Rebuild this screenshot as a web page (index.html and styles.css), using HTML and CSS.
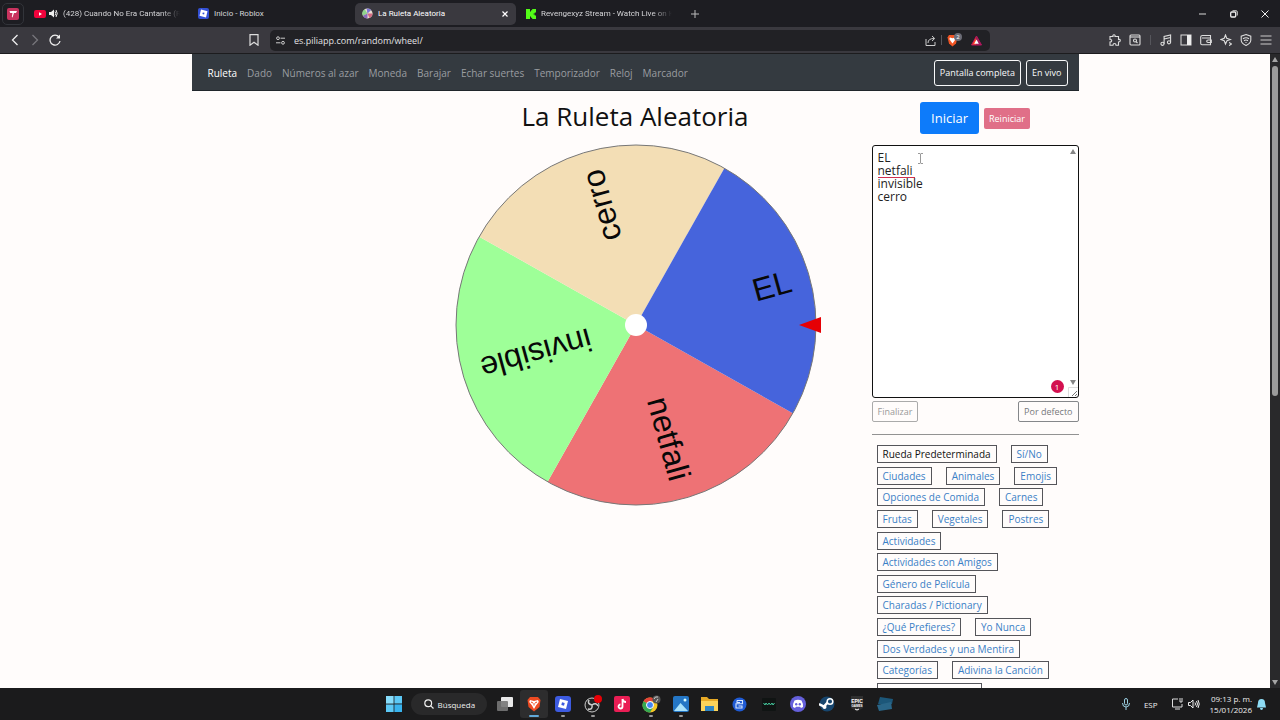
FILE: index.html
```html
<!DOCTYPE html>
<html lang="es">
<head>
<meta charset="utf-8">
<title>La Ruleta Aleatoria</title>
<link rel="stylesheet" href="styles.css">
</head>
<body>
<div class="tabstrip">
  <button class="pinned" aria-label="Pestaña fijada"><svg width="12" height="12" viewBox="0 0 12 12"><rect width="12" height="12" rx="2" fill="#c9335f"/><path d="M2.500 3h7.500L9 5H7L5.500 9.500 4.800 9l.7-4H3.200z" fill="#fff"/></svg></button>
  <button class="tab">
    <svg width="12" height="8" viewBox="0 0 12 8"><rect width="12" height="8" rx="2" fill="#f0033c"/><path d="M5 2.200v3.600L8 4z" fill="#fff"/></svg>
    <svg width="9" height="9" viewBox="0 0 9 9"><path d="M0 3v3h2l3 2.500v-8L2 3z" fill="#eee"/><path d="M6 2.500q1.500 2 0 4M7 1q2.500 3.500 0 7" fill="none" stroke="#eee"/></svg>
    <span class="tab-title fade">(428) Cuando No Era Cantante (R</span>
  </button>
  <button class="tab">
    <svg width="11" height="11" viewBox="0 0 11 11"><rect width="11" height="11" rx="2" fill="#3350d4"/><path d="M3 1.500l6.500 1.700L8 9.500 1.500 7.800z" fill="#fff"/><path d="M4.800 4.400l1.700.4-.4 1.700-1.700-.4z" fill="#3350d4"/></svg>
    <span class="tab-title">Inicio - Roblox</span>
  </button>
  <button class="tab active">
    <svg width="11" height="11" viewBox="-6 -6 12 12"><circle r="5.500" fill="#eadfd2"/><path d="M0 0L-5 2.500A5.500 5.500 0 0 1-3 -4.600z" fill="#8fd58e"/><path d="M0 0L-1-5.400A5.500 5.500 0 0 1 4-3.800z" fill="#7c74d4"/><path d="M0 0L5.500 0A5.500 5.500 0 0 1 2 5z" fill="#d36a82"/><path d="M0 0L0 5.500A5.500 5.500 0 0 1-5 2.500z" fill="#8a69bb"/></svg>
    <span class="tab-title">La Ruleta Aleatoria</span>
    <svg width="6" height="6" viewBox="0 0 6 6"><path d="M.5.500l5 5m0-5l-5 5" stroke="#fff" stroke-width="1.200"/></svg>
  </button>
  <button class="tab">
    <svg width="10" height="10" viewBox="0 0 10 10"><path d="M0 0h4v2.500h1V1.200h1.200V0H10v3.500H8.800v1H7.600v1h1.200v1H10V10H6.200V8.800H5V7.500H4V10H0z" fill="#53fc18"/></svg>
    <span class="tab-title fade">Revengexyz Stream - Watch Live on K</span>
  </button>
  <button class="plus" aria-label="Nueva pestaña"><svg width="8" height="8" viewBox="0 0 8 8"><path d="M4 0v8M0 4h8" stroke="#bbb"/></svg></button>
  <div class="window-controls">
    <button aria-label="Minimizar"><svg width="8" height="8" viewBox="0 0 8 8"><path d="M0 4h7" stroke="#bbb" stroke-width="1.200"/></svg></button>
    <button aria-label="Restaurar"><svg width="8" height="8" viewBox="0 0 8 8"><rect x=".7" y="2" width="5" height="5" rx="1" fill="none" stroke="#eee" stroke-width="1.300"/><path d="M2.500.700h3.500q1.300 0 1.300 1.300v3.500" fill="none" stroke="#ccc"/></svg></button>
    <button aria-label="Cerrar"><svg width="8" height="8" viewBox="0 0 8 8"><path d="M.5.500l7 7m0-7l-7 7" stroke="#eee"/></svg></button>
  </div>
</div>
<div class="toolbar">
  <div class="toolbar-left">
    <button aria-label="Atrás"><svg width="12" height="12" viewBox="0 0 12 12"><path d="M8.500 1L3.500 6l5 5" fill="none" stroke="#eee" stroke-width="1.300"/></svg></button>
    <button aria-label="Adelante"><svg width="12" height="12" viewBox="0 0 12 12"><path d="M3.500 1l5 5-5 5" fill="none" stroke="#77767c" stroke-width="1.300"/></svg></button>
    <button aria-label="Recargar"><svg width="12" height="12" viewBox="0 0 12 12"><path d="M10 3A5 5 0 1 0 11 7" fill="none" stroke="#eee" stroke-width="1.300"/><path d="M11 .5V4.500H7z" fill="#eee"/></svg></button>
    <button class="bookmark" aria-label="Marcador"><svg width="12" height="12" viewBox="0 0 12 12"><path d="M2 .700h8v10.500L6 8.200 2 11.200z" fill="none" stroke="#ddd" stroke-width="1.200"/></svg></button>
  </div>
  <div class="address">
    <svg width="9" height="9" viewBox="0 0 9 9" fill="none" stroke="#ccc"><circle cx="2" cy="2.200" r="1.400"/><path d="M4.500 2.200H9M0 6.800h4.500"/><circle cx="7" cy="6.800" r="1.400"/></svg>
    <input class="url" aria-label="Dirección" value="es.piliapp.com/random/wheel/">
    <svg width="11" height="11" viewBox="0 0 11 11" fill="none" stroke="#ccc"><path d="M1 4v6.500h9V7M3 8q0-4.500 6-4.500M7 1l2.700 2.500L7 6"/></svg>
    <span class="divider"></span>
    <svg class="brave" width="15" height="14" viewBox="0 0 15 14"><path d="M2 2h7l1.500 2.500L9 10.500 5.500 13.500 2 10.500.5 4.500z" fill="#f05423"/><path d="M3 4.500l2.500.700L8 4.500l.7 1.500L7 8.500l-1.500 2L4 8.500 2.300 6z" fill="#fff"/><circle cx="11" cy="4" r="4" fill="#6b6c76"/><text x="11" y="6" class="badge-text">2</text></svg>
    <svg width="11" height="11" viewBox="0 0 11 11"><path d="M5.500 1L.5 10h5z" fill="#ff4724"/><path d="M5.500 1l5 9h-5z" fill="#9e1f63"/><path d="M5.500 1L.5 10h10z" fill="none" stroke="#b5155e"/><path d="M5.500 4.500L3.200 8.700h4.600z" fill="#fff"/></svg>
  </div>
  <div class="toolbar-right">
    <button aria-label="Extensiones"><svg width="12" height="12" viewBox="0 0 12 12" fill="none" stroke="#ddd" stroke-width="1.100"><path d="M1 2.500h3Q3.500.700 5 .700T6 2.500h3.500v3Q11.300 5 11.300 6.500T9.500 8v3.200H7Q7 9.500 5.500 9.500T4 11.200H1V8Q2.700 8 2.700 6.700T1 5.500z"/></svg></button>
    <button aria-label="Buscar en página"><svg width="12" height="12" viewBox="0 0 12 12" fill="none" stroke="#ddd" stroke-width="1.100"><rect x="1" y="1" width="10" height="10" rx="1"/><path d="M1 3h10"/><circle cx="6" cy="6.500" r="1.500"/><path d="M7 7.500l1.500 1.500"/></svg></button>
    <span class="divider"></span>
    <button aria-label="Música"><svg width="12" height="12" viewBox="0 0 12 12" fill="none" stroke="#ddd" stroke-width="1.100"><circle cx="2.500" cy="9.800" r="1.600"/><circle cx="9" cy="8.300" r="1.600"/><path d="M4.100 9.800V2.500l6.500-1.500v7.300M4.100 5l6.500-1.500"/></svg></button>
    <button aria-label="Barra lateral"><svg width="12" height="12" viewBox="0 0 12 12"><rect x="1" y="1" width="10" height="10" fill="none" stroke="#ddd"/><rect x="7" y="1" width="4" height="10" fill="#eee"/></svg></button>
    <button aria-label="Cartera"><svg width="12" height="12" viewBox="0 0 12 12" fill="none" stroke="#ddd" stroke-width="1.100"><path d="M10.500 4V1.500h-8Q.7 1.500.7 3v6.500q0 1.200 1.300 1.200h8.500V4H2"/><path d="M11.300 6H8q-1.300 0-1.300 1.200T8 8.500h3.300z"/></svg></button>
    <button aria-label="Asistente"><svg width="12" height="12" viewBox="0 0 12 12" fill="none" stroke="#ddd" stroke-width="1.100"><path d="M5.500 1l1.200 3.300L10.500 5.500 7 6.700 5.500 10 4.200 6.700.7 5.500l3.500-1.200zM9.500 8l.6 1.400 1.400.6-1.400.6-.6 1.400"/></svg></button>
    <button aria-label="Protección"><svg width="12" height="12" viewBox="0 0 12 12" fill="none" stroke="#ddd" stroke-width="1.100"><path d="M6 .600l4.800 1.600v4Q10.500 9.500 6 11.500 1.500 9.500 1.200 6.200v-4zM3 4.700q3-2 6 0M4 6.700q2-1.300 4 0M5.500 8.500h1"/></svg></button>
    <button aria-label="Menú"><svg width="12" height="12" viewBox="0 0 12 12"><path d="M.5 2h11M.5 6h11M.5 10h11" stroke="#ccc" stroke-width="1.200"/></svg></button>
  </div>
</div>
<div class="viewport">
  <div class="page">
    <nav class="site-nav">
      <a class="current" href="#">Ruleta</a><a href="#">Dado</a><a href="#">Números al azar</a><a href="#">Moneda</a><a href="#">Barajar</a><a href="#">Echar suertes</a><a href="#">Temporizador</a><a href="#">Reloj</a><a href="#">Marcador</a>
      <div class="nav-actions"><button>Pantalla completa</button><button>En vivo</button></div>
    </nav>
    <div class="layout">
      <main class="stage">
        <h1>La Ruleta Aleatoria</h1>
        <svg class="wheel" width="372" height="362" viewBox="-187 -181 372 362">
          <g transform="rotate(29.400)">
            <path d="M0 0H180A180 180 0 0 1 0 180z" fill="#ee7275"/>
            <path d="M0 0V180A180 180 0 0 1-180 0z" fill="#9eff98"/>
            <path d="M0 0H-180A180 180 0 0 1 0-180z" fill="#f3deb5"/>
            <path d="M0 0V-180A180 180 0 0 1 180 0z" fill="#4664dc"/>
          </g>
          <circle class="rim" r="180"/>
          <text class="slice" transform="rotate(-15.600)" x="161" y="10">EL</text>
          <text class="slice" transform="rotate(74.400)" x="161" y="10">netfali</text>
          <text class="slice" transform="rotate(164.400)" x="161" y="10">invisible</text>
          <text class="slice" transform="rotate(254.400)" x="161" y="10">cerro</text>
          <circle r="11" fill="#fff"/>
          <path d="M163 0L185-8V8z" fill="#e60005"/>
        </svg>
      </main>
      <aside class="panel">
        <div class="run"><button class="start">Iniciar</button><button class="reset">Reiniciar</button></div>
        <div class="editor">
          <textarea aria-label="Opciones de la ruleta" spellcheck="false">EL
netfali
invisible
cerro</textarea>
          <span class="misspelling"></span>
          <svg class="ibeam" width="5" height="11" viewBox="0 0 5 11"><path d="M0 .5h2l.5.500.5-.5h2M2.500 1v9M0 10.500h2l.5-.5.5.500h2" stroke="#999" fill="none"/></svg>
          <svg class="arrow-up" width="6" height="5" viewBox="0 0 6 5"><path d="M3 0l3 5H0z" fill="#858585"/></svg>
          <svg class="arrow-down" width="6" height="5" viewBox="0 0 6 5"><path d="M3 5l3-5H0z" fill="#858585"/></svg>
          <svg class="grip" width="10" height="10" viewBox="0 0 10 10"><path d="M.5 10V.5H10" stroke="#ddd" fill="none"/><path d="M4 9l5-5M7 9l2-2" stroke="#777" fill="none"/></svg>
          <span class="count">1</span>
        </div>
        <div class="edit-actions"><button class="faint">Finalizar</button><button>Por defecto</button></div>
        <hr>
        <div class="presets">
          <div><a class="chosen" href="#">Rueda Predeterminada</a><a href="#">Sí/No</a></div>
          <div><a href="#">Ciudades</a><a href="#">Animales</a><a href="#">Emojis</a></div>
          <div><a href="#">Opciones de Comida</a><a href="#">Carnes</a></div>
          <div><a href="#">Frutas</a><a href="#">Vegetales</a><a href="#">Postres</a></div>
          <div><a href="#">Actividades</a></div>
          <div><a href="#">Actividades con Amigos</a></div>
          <div><a href="#">Género de Película</a></div>
          <div><a href="#">Charadas / Pictionary</a></div>
          <div><a href="#">¿Qué Prefieres?</a><a href="#">Yo Nunca</a></div>
          <div><a href="#">Dos Verdades y una Mentira</a></div>
          <div><a href="#">Categorías</a><a href="#">Adivina la Canción</a></div>
          <div><a href="#">Adivina el Personaje</a></div>
        </div>
      </aside>
    </div>
  </div>
  <div class="scrollbar">
    <svg width="6" height="5" viewBox="0 0 6 5"><path d="M3 0l3 5H0z" fill="#a5a5a5"/></svg>
    <span class="thumb"></span>
    <svg width="6" height="5" viewBox="0 0 6 5"><path d="M3 5l3-5H0z" fill="#a5a5a5"/></svg>
  </div>
</div>
<footer class="taskbar">
  <div class="apps">
    <button aria-label="Inicio"><svg width="16" height="16" viewBox="0 0 16 16" fill="#5cc8f5"><path d="M0 0h7.600v7.600H0z" fill="#86dcfa"/><path d="M8.400 0H16v7.600H8.400zM0 8.400h7.600V16H0z"/><path d="M8.400 8.400H16V16H8.400z" fill="#38b3ee"/></svg></button>
    <button class="search"><svg width="10" height="10" viewBox="0 0 10 10"><circle cx="4.200" cy="4.200" r="3.400" fill="none" stroke="#eee" stroke-width="1.200"/><path d="M6.800 6.800L9.500 9.500" stroke="#eee" stroke-width="1.200"/></svg>Búsqueda</button>
    <button aria-label="Vista de tareas"><svg width="18" height="16" viewBox="0 0 18 16"><rect x="5" y="1" width="12" height="10" rx="1" fill="#e8e8e8"/><rect x="1" y="5" width="11" height="10" rx="1" fill="#777" opacity=".9"/></svg></button>
    <button class="focused" aria-label="Brave"><svg width="14" height="16" viewBox="0 0 14 16"><path d="M3 1h8l2.500 3-1 7L7 15.500 1.500 11 .5 4z" fill="#ee4b22"/><path d="M3 4l4 1 4-1 .8 2L9 9.500 7 13 5 9.500 2.200 6z" fill="#fff"/><path d="M4 6l2 1M10 6L8 7M7 7v2.500" stroke="#ee4b22"/></svg></button>
    <button class="running" aria-label="Roblox"><svg width="16" height="16" viewBox="0 0 16 16"><rect width="16" height="16" rx="3" fill="#3d5be0"/><path d="M5 3l8 2-2 8-8-2z" fill="#fff"/><path d="M7 6.300l2.700.7L9 9.700 6.300 9z" fill="#3d5be0"/></svg></button>
    <button class="running" aria-label="OBS"><svg width="18" height="18" viewBox="0 0 18 18"><circle cx="8" cy="10" r="7" fill="#222" stroke="#ccc"/><path d="M8 10Q3 9 5 5M8 10q4-3 6 1M8 10q1 5-4 4" fill="none" stroke="#ccc" stroke-width="1.500"/><circle cx="14" cy="4" r="4" fill="#e80006"/></svg></button>
    <button aria-label="TikTok"><svg width="16" height="16" viewBox="0 0 16 16"><rect width="16" height="16" rx="2" fill="#ea1e55"/><path d="M8.500 3v7.500a2 2 0 1 1-2-2M8.500 3q.5 3 3.500 3" fill="none" stroke="#fff" stroke-width="1.800"/></svg></button>
    <button class="running" aria-label="Chrome"><svg width="20" height="18" viewBox="0 0 20 18"><circle cx="9" cy="10" r="7.500" fill="#f6c624"/><path d="M9 10L2.500 6.200A7.500 7.500 0 0 1 15.500 6.200H9z" fill="#e5433a"/><path d="M9 10L2.500 6.200A7.500 7.500 0 0 0 9 17.500l3-5z" fill="#35a852"/><circle cx="9" cy="10" r="3.500" fill="#4285f4" stroke="#fff"/><circle cx="15.500" cy="4.500" r="4" fill="#555"/><path d="M13 4q1-3 4-2M15 7l2-3" stroke="#ccc" fill="none"/></svg></button>
    <button class="running" aria-label="Fotos"><svg width="16" height="16" viewBox="0 0 16 16"><rect width="16" height="16" rx="2" fill="#2476c5"/><path d="M1 15l6.500-8 7.500 8z" fill="#a9e2fb"/><circle cx="12" cy="4" r="1.500" fill="#dff"/></svg></button>
    <button aria-label="Explorador"><svg width="17" height="16" viewBox="0 0 17 16"><path d="M0 1h6l2 2h9v12H0z" fill="#e7aa26"/><path d="M0 5h17v10H0z" fill="#fbd35a"/><path d="M4 10h9v5H4z" fill="#2f86c4"/></svg></button>
    <button aria-label="Aplicación azul"><svg width="15" height="15" viewBox="0 0 15 15"><circle cx="7.500" cy="7.500" r="7" fill="#1f5bd5"/><path d="M5 3.500h5.500v3.300H4V11h6V9H6.500M5 3.500v2h3" fill="none" stroke="#d8e8ff" stroke-width="1.100"/></svg></button>
    <button aria-label="Monitor"><svg width="14" height="13" viewBox="0 0 14 13"><rect width="14" height="13" rx="1" fill="#101413"/><path d="M1.500 5l1.500 2 1-2 1.500 2L7 5l1.500 2L10 5l1 2 1.500-2" stroke="#45c89d" fill="none"/></svg></button>
    <button aria-label="Discord"><svg width="16" height="16" viewBox="0 0 16 16"><circle cx="8" cy="8" r="8" fill="#6560db"/><path d="M4.500 4.500Q8 3 11.500 4.500 13.500 8 13 11l-2 1-1-1.200H6L5 12l-2-1Q2.500 8 4.500 4.500z" fill="#fff"/><circle cx="6.200" cy="8.300" r="1.200" fill="#6560db"/><circle cx="9.800" cy="8.300" r="1.200" fill="#6560db"/></svg></button>
    <button aria-label="Steam"><svg width="16" height="16" viewBox="0 0 16 16"><circle cx="8" cy="8" r="7.500" fill="#17466e"/><path d="M0 8l5 2.500L9 6" stroke="#fff" stroke-width="2.500" fill="none"/><circle cx="11" cy="5.500" r="2.800" fill="#17466e" stroke="#fff" stroke-width="1.500"/><circle cx="5.500" cy="11" r="2" fill="#fff"/></svg></button>
    <button aria-label="Epic Games"><svg width="14" height="16" viewBox="0 0 14 16"><path d="M1 0h12v12l-6 3.500L1 12z" fill="#303030"/><text x="7" y="7" class="epic">EPIC</text><text x="7" y="11" class="epic-small">GAMES</text><path d="M5 13l2 1 2-1" fill="none" stroke="#fff"/></svg></button>
    <button aria-label="Aplicación"><svg width="18" height="14" viewBox="0 0 18 14"><path d="M3 0l13 2-1 5H1z" fill="#1c5779"/><path d="M0 8l14-3 1 7-13 2z" fill="#2a6688"/></svg></button>
  </div>
  <div class="tray">
    <svg width="8" height="12" viewBox="0 0 8 12" fill="none" stroke="#9bd0e2"><rect x="2.500" y=".5" width="3" height="6.500" rx="1.500"/><path d="M.5 5q0 4 3.500 4t3.500-4M4 9v3"/></svg>
    <span>ESP</span>
    <span class="status"><svg width="11" height="12" viewBox="0 0 11 12" fill="none" stroke="#ddd"><path d="M6 1H.5v8H10V6M3 11h5M8 0v4h2V0"/></svg><svg width="12" height="10" viewBox="0 0 12 10" fill="none" stroke="#eee"><path d="M.5 3.500v3h2L5 9V1L2.500 3.500zM7 3.500q1 1.500 0 3M8.500 2q2 3 0 6M10 1q2.500 4 0 8"/></svg></span>
    <time>09:13 p. m.<br>15/01/2026</time>
    <svg width="9" height="11" viewBox="0 0 9 11"><path d="M4.500 0Q8 0 8 4l1 4.500H0L1 4Q1 0 4.500 0zM3 9h3q0 2-1.500 2T3 9z" fill="#8edcf4"/></svg>
  </div>
</footer>
</body>
</html>
```
FILE: styles.css
```css
* { box-sizing: border-box; }
body {
  margin: 0;
  height: 100vh;
  display: flex;
  flex-direction: column;
  overflow: hidden;
  background: #1b1b1c;
  font-family: "Open Sans", "Noto Sans", sans-serif;
  color: #111;
}
button { font: inherit; color: inherit; border: 0; padding: 0; background: none; }
svg { display: block; flex: none; }
a { text-decoration: none; }

/* Browser tabs */
.tabstrip {
  flex: none;
  height: 27px;
  display: flex;
  align-items: center;
  padding: 0 5px 0 2px;
  background: #1d1d22;
  color: #d5d5d8;
  font-family: Roboto, "Open Sans", sans-serif;
  font-size: 8px;
}
.pinned {
  width: 22px;
  height: 22px;
  display: grid;
  place-items: center;
  margin-right: 3px;
  border: 1px solid #32343a;
  border-radius: 5px;
}
.tab {
  width: 161px;
  height: 22px;
  display: flex;
  align-items: center;
  gap: 5px;
  margin-right: 3px;
  padding: 0 8px 0 7px;
  border-radius: 5px;
  text-align: left;
}
.tab svg + svg { margin-left: -2px; }
.tab.active { background: #3a393f; color: #fff; }
.tab-title { flex: 1; overflow: hidden; white-space: nowrap; }
.fade { -webkit-mask-image: linear-gradient(90deg, #000 85%, transparent); }
.plus { margin-left: 8px; }
.window-controls { display: flex; gap: 23px; margin-left: auto; padding-right: 6px; }

/* Browser toolbar */
.toolbar {
  flex: none;
  height: 27px;
  display: flex;
  align-items: center;
  background: #3a393f;
  border-bottom: 1px solid #1c1c1e;
}
.toolbar-left { width: 270px; display: flex; gap: 8px; padding: 0 10px 0 9px; }
.bookmark { margin-left: auto; }
.address {
  flex: 1;
  height: 21px;
  display: flex;
  align-items: center;
  gap: 9px;
  padding: 0 8px 0 6px;
  border-radius: 5px;
  background: #212125;
}
.url {
  flex: 1;
  min-width: 0;
  border: 0;
  padding: 0;
  background: none;
  color: #e2e2e4;
  font: 9px "Open Sans", "Noto Sans", sans-serif;
}
.divider { width: 1px; height: 10px; background: #56565c; }
.address .divider { margin: 0 -4px; }
.badge-text { font-size: 6px; fill: #fff; text-anchor: middle; }
.toolbar-right {
  width: 290px;
  display: flex;
  align-items: center;
  justify-content: flex-end;
  gap: 8px;
  padding-right: 8px;
}
.toolbar-right .divider { margin: 0 1px; }

/* Web page */
.viewport { flex: 1; min-height: 0; display: flex; background: #fffcfb; }
.page { flex: 1; min-width: 0; overflow: hidden; }
.site-nav {
  max-width: 887px;
  height: 37px;
  margin: 0 auto;
  display: flex;
  align-items: center;
  gap: 10px;
  padding: 1px 11px 0 16px;
  background: #343a40;
  border-bottom: 1px solid #20262b;
  font-size: 10px;
}
.site-nav a { color: #9a9da0; }
.site-nav .current { color: #fff; }
.nav-actions { display: flex; gap: 5px; margin-left: auto; }
.nav-actions button {
  height: 26px;
  padding: 0 5px;
  border: 1px solid #f8f9fa;
  border-radius: 3px;
  color: #f8f9fa;
  font-size: 9px;
}
.layout {
  max-width: 887px;
  margin: 0 auto;
  display: grid;
  grid-template-columns: 207px 1fr 207px;
}
.stage { grid-column: 2; display: flex; flex-direction: column; align-items: center; }
h1 { margin: 7px 0 10px; font-size: 26px; line-height: 36px; font-weight: 500; }
.rim { fill: none; stroke: #777; stroke-width: 1; }
.slice {
  font-family: "Liberation Sans", Arial, sans-serif;
  font-size: 32px;
  text-anchor: end;
  fill: #080808;
}
.run { display: flex; justify-content: center; align-items: center; gap: 5px; padding: 11px 0; }
.start { height: 32px; padding: 0 11px; border-radius: 3px; background: #0d7bfa; color: #fff; font-size: 13px; }
.reset { height: 21px; padding: 0 5px; border-radius: 2px; background: #e06f88; color: #fff; font-size: 9px; }
.editor { position: relative; }
textarea {
  display: block;
  width: 100%;
  height: 253px;
  padding: 5px;
  border: 1px solid #111;
  border-radius: 3px;
  outline: 0;
  resize: none;
  overflow: hidden;
  background: #fff;
  color: #222;
  font: 12px/13px "Open Sans", "Noto Sans", sans-serif;
}
.misspelling { position: absolute; left: 6px; top: 32px; width: 37px; height: 1px; background: #d0304f; }
.ibeam { position: absolute; left: 46px; top: 8px; }
.arrow-up { position: absolute; right: 3px; top: 4px; }
.arrow-down { position: absolute; right: 3px; bottom: 13px; }
.grip { position: absolute; right: 1px; bottom: 1px; }
.count {
  position: absolute;
  right: 15px;
  bottom: 5px;
  width: 13px;
  height: 13px;
  border-radius: 50%;
  background: #d3104f;
  color: #fff;
  font-size: 8px;
  line-height: 13px;
  text-align: center;
}
.edit-actions { display: flex; justify-content: space-between; padding-top: 3px; }
.edit-actions button {
  height: 21px;
  padding: 0 5px;
  border: 1px solid #85878a;
  border-radius: 2px;
  color: #77797c;
  font-size: 9px;
}
.edit-actions .faint { color: #999; border-color: #aaa; }
hr { height: 1px; margin: 12px 0 10px; border: 0; background: #929292; }
.presets {
  min-height: 256px;
  display: flex;
  flex-direction: column;
  justify-content: space-between;
  padding-left: 5px;
  font-size: 10px;
  line-height: 16px;
}
.presets div { display: flex; gap: 14px; }
.presets a { padding: 0 5px; border: 1px solid #55555a; color: #3b7fc6; white-space: nowrap; }
.presets .chosen { color: #111; }
.scrollbar {
  width: 10px;
  display: flex;
  flex-direction: column;
  align-items: center;
  padding: 3px 0;
  background: #29292b;
}
.thumb { width: 6px; height: 330px; margin: 4px 0 auto; border-radius: 3px; background: #9b9b9b; }

/* Taskbar */
.taskbar {
  flex: none;
  height: 32px;
  display: grid;
  grid-template-columns: 1fr 520px 1fr;
  background: #1b1b1c;
  color: #eee;
  font-size: 8px;
}
.apps { grid-column: 2; display: flex; justify-content: space-between; align-items: center; }
.apps button {
  position: relative;
  width: 28px;
  height: 28px;
  display: flex;
  align-items: center;
  justify-content: center;
  border-radius: 3px;
}
.apps .search { width: 76px; height: 22px; margin: 0 2px; gap: 4px; border-radius: 11px; background: #29292a; }
.apps .focused { background: #2d2d2e; }
.focused::after, .running::after {
  content: "";
  position: absolute;
  left: 12px;
  bottom: 1px;
  width: 4px;
  height: 2px;
  border-radius: 1px;
  background: #999;
}
.focused::after { left: 9px; width: 10px; background: #62a9d8; }
.epic, .epic-small { font: bold 5px "Liberation Sans", sans-serif; fill: #fff; text-anchor: middle; }
.epic-small { font-size: 3px; }
.tray { display: flex; align-items: center; justify-content: flex-end; gap: 14px; padding-right: 14px; }
.status { display: flex; align-items: center; gap: 5px; }
.tray time { margin: 0 -9px 0 -4px; text-align: right; line-height: 11px; }
```
